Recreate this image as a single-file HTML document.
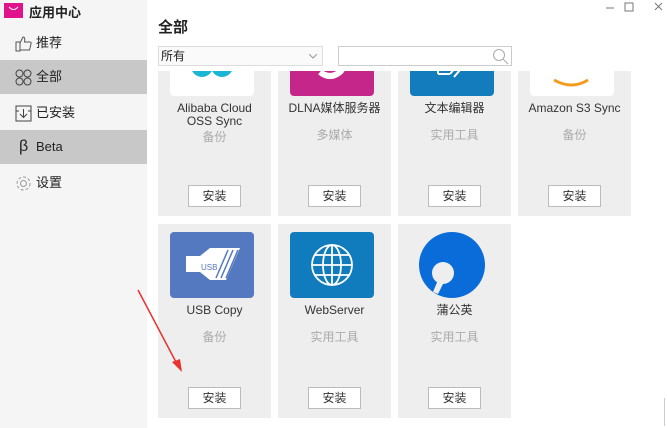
<!DOCTYPE html>
<html><head><meta charset="utf-8"><style>
*{margin:0;padding:0;box-sizing:border-box}
body{width:667px;height:428px;overflow:hidden;background:#fff;font-family:"Liberation Sans","Noto Sans CJK SC",sans-serif;position:relative;color:#222}
.side{position:absolute;left:0;top:0;width:147px;height:428px;background:#f5f5f5}
.logo{position:absolute;left:4px;top:3px;width:19px;height:15px;background:#e0128c}
.apptitle{position:absolute;left:29px;top:2px;font-size:13px;font-weight:bold}
.nav{position:absolute;left:0;width:147px;height:34px;font-size:13px;line-height:34px;padding-left:36px;color:#222}
.nav.sel{background:#c8c8c8}
.nav svg{position:absolute;left:15px;top:9px}
.t{position:absolute;left:158px;top:16px;font-size:15px;font-weight:bold}
.dd{position:absolute;left:158px;top:46px;width:165px;height:20px;border:1px solid #ddd;background:#fafafa;font-size:12px;line-height:18px;padding-left:2px}
.sr{position:absolute;left:338px;top:46px;width:174px;height:20px;border:1px solid #ccc}
.view{position:absolute;left:148px;top:71px;width:515px;height:357px;overflow:hidden}
.card{position:absolute;width:113px;height:194px;background:#eee;text-align:center}
.ic{position:absolute;left:12px;top:8px;width:84px;height:66px;border-radius:4px;overflow:hidden}
.nm{position:absolute;left:0;right:0;top:80px;font-size:12px;line-height:13px;color:#333}
.ct{position:absolute;left:0;right:0;top:104px;font-size:12px;color:#aaa}
.bt{position:absolute;left:30px;top:163px;width:53px;height:22px;border:1px solid #bbb;background:#fff;font-size:12px;line-height:20px;color:#333}
</style></head><body>
<div class="side">
<div class="logo"><svg width="19" height="15"><path d="M5 4 Q9.5 9 14 4" stroke="#fff" fill="none" stroke-width="1"/></svg></div>
<div class="apptitle">应用中心</div>
<div class="nav" style="top:26px"><svg width="17" height="17" fill="none" stroke="#555"><path d="M1 7h4v9H1zM5 8 8 2c2 0 2 2 1.5 5H15c1 0 1.5 1 1 2l-1.5 6H5"/></svg>推荐</div>
<div class="nav sel" style="top:60px"><svg width="17" height="17" fill="none" stroke="#444"><circle cx="4.5" cy="4.5" r="3.5"/><circle cx="12.5" cy="4.5" r="3.5"/><circle cx="4.5" cy="12.5" r="3.5"/><circle cx="12.5" cy="12.5" r="3.5"/></svg>全部</div>
<div class="nav" style="top:96px"><svg width="17" height="17" fill="none" stroke="#444"><rect x="1" y="1" width="15" height="15"/><path d="M8.5 4v8M5 9l3.5 3.5L12 9M1 6h3M13 6h3"/></svg>已安装</div>
<div class="nav sel" style="top:130px"><span style="position:absolute;left:19px;font-size:16px">β</span>Beta</div>
<div class="nav" style="top:166px"><svg width="17" height="17" fill="none" stroke="#999"><circle cx="8.5" cy="8.5" r="3"/><circle cx="8.5" cy="8.5" r="6.5" stroke-dasharray="3 2"/></svg>设置</div>
</div>
<svg style="position:absolute;left:600px;top:2px" width="67" height="14" stroke="#777" fill="none"><path d="M6 6h8M25 1h8v8h-8zM55 1l7 7M62 1l-7 7"/></svg>
<div class="t">全部</div>
<div class="dd">所有<svg style="position:absolute;right:5px;top:7px" width="8" height="5" fill="none" stroke="#999"><path d="M0 0l4 4 4-4"/></svg></div>
<div class="sr"><svg style="position:absolute;right:2px;top:1px" width="17" height="17" fill="none" stroke="#aaa"><circle cx="7" cy="7" r="5.5"/><path d="M11 11l5 5"/></svg></div>
<div class="view">
<div class="card" style="left:10px;top:-49px"><div class="ic" style="background:#fff"><svg width="84" height="66"><circle cx="32" cy="36" r="11" fill="#1bb6d3"/><circle cx="52" cy="36" r="11" fill="#1bb6d3"/></svg></div><div class="nm">Alibaba Cloud<br>OSS Sync</div><div class="ct" style="top:106px">备份</div><div class="bt">安装</div></div>
<div class="card" style="left:130px;top:-49px"><div class="ic" style="background:#c42689"><svg width="84" height="66"><path d="M30 42q10 8 20 0q6-6 0-10" stroke="#fff" stroke-width="6" fill="none"/></svg></div><div class="nm">DLNA媒体服务器</div><div class="ct">多媒体</div><div class="bt">安装</div></div>
<div class="card" style="left:250px;top:-49px"><div class="ic" style="background:#127cbd"><svg width="84" height="66" fill="none" stroke="#fff" stroke-width="2"><path d="M28 44h12M28 36v8M40 44l12-14 4 3-12 14"/></svg></div><div class="nm">文本编辑器</div><div class="ct">实用工具</div><div class="bt">安装</div></div>
<div class="card" style="left:370px;top:-49px"><div class="ic" style="background:#fff"><svg width="84" height="66"><path d="M24 50q18 10 34 0" stroke="#f39c1c" stroke-width="3" fill="none"/></svg></div><div class="nm">Amazon S3 Sync</div><div class="ct">备份</div><div class="bt">安装</div></div>
<div class="card" style="left:10px;top:153px"><div class="ic" style="background:#5479c0"><svg width="84" height="66"><path d="M16 24h14l10-8h30l-14 32H40l-10-8H16z" fill="#fff"/><path d="M58 18l-12 28M63 18l-12 28M68 18l-12 28" stroke="#5479c0" stroke-width="1.5"/><text x="31" y="38" font-size="8" fill="#5479c0" font-family="Liberation Sans">USB</text></svg></div><div class="nm">USB Copy</div><div class="ct">备份</div><div class="bt">安装</div></div>
<div class="card" style="left:130px;top:153px"><div class="ic" style="background:#117cbd"><svg width="84" height="66" fill="none" stroke="#fff" stroke-width="1.8"><circle cx="42" cy="33" r="20"/><ellipse cx="42" cy="33" rx="9" ry="20"/><path d="M42 13v40M22 33h40M25 23h34M25 43h34"/></svg></div><div class="nm">WebServer</div><div class="ct">实用工具</div><div class="bt">安装</div></div>
<div class="card" style="left:250px;top:153px"><div class="ic" style="border-radius:0"><svg width="84" height="66"><circle cx="42" cy="33" r="33" fill="#0a6cd8"/><circle cx="33" cy="41" r="11" fill="#eee"/><path d="M28 48l-5 12 5 2 6-12z" fill="#eee"/></svg></div><div class="nm">蒲公英</div><div class="ct">实用工具</div><div class="bt">安装</div></div>
</div>
<div style="position:absolute;left:664px;top:398px;width:1px;height:28px;background:#ccc"></div>
<svg style="position:absolute;left:130px;top:280px" width="60" height="100"><path d="M8 10L47 84" stroke="#e8322e" stroke-width="1.5"/><path d="M52 92l-10-10 8-3z" fill="#e8322e"/></svg>
</body></html>
